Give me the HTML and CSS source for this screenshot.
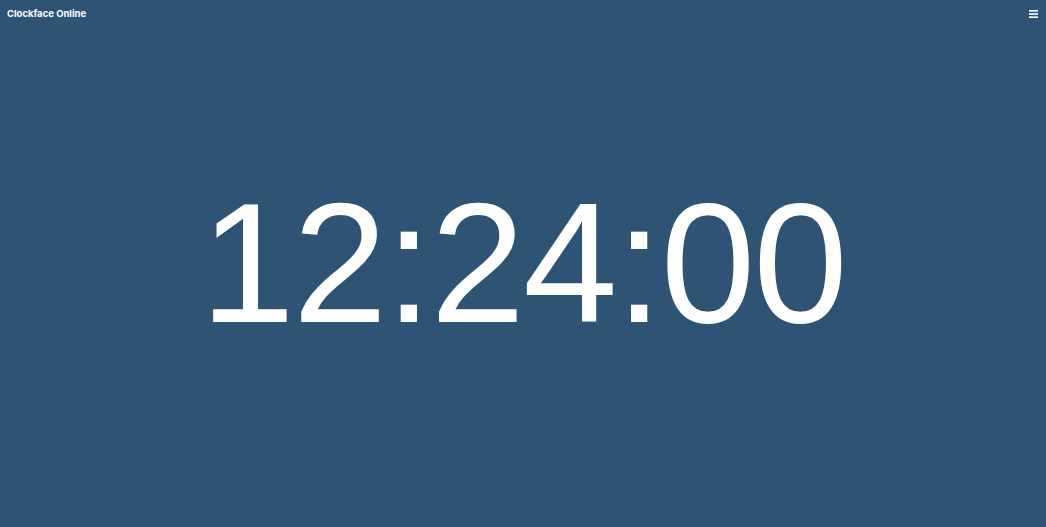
FILE: index.html
```html
<!DOCTYPE html>
<html lang="en">
<head>
  <meta charset="UTF-8">
  <meta name="viewport" content="width=device-width, initial-scale=1.0">
  <title>Clockface Online</title>
  <link rel="stylesheet" href="styles.css">
</head>
<body>
  <header class="topbar">
    <span class="brand">Clockface Online</span>
    <button class="menu" aria-label="Menu">
      <svg width="9" height="8" viewBox="0 0 9 8">
        <rect x="0" y="0" width="9" height="1.6" fill="#fff"/>
        <rect x="0" y="3.2" width="9" height="1.6" fill="#fff"/>
        <rect x="0" y="6.4" width="9" height="1.6" fill="#fff"/>
      </svg>
    </button>
  </header>
  <main class="stage">
    <div class="clock">12:24:00</div>
  </main>
</body>
</html>
```

FILE: styles.css
```css
* {
  margin: 0;
  padding: 0;
  box-sizing: border-box;
}

body {
  font-family: "Liberation Sans", Arial, sans-serif;
  background-color: #2e5374;
  color: #fff;
  height: 100vh;
  display: flex;
  flex-direction: column;
  overflow: hidden;
}

.topbar {
  position: absolute;
  top: 0;
  left: 0;
  right: 0;
  display: flex;
  justify-content: space-between;
  align-items: center;
  height: 27px;
  padding: 0 8px 0 7px;
}

.brand {
  font-family: Inter, "Open Sans", sans-serif;
  font-weight: 700;
  font-size: 9.5px;
}

.menu {
  background: none;
  border: none;
  display: flex;
  cursor: pointer;
}

.stage {
  flex: 1;
  display: flex;
  justify-content: center;
  align-items: center;
}

.clock {
  font-size: 170px;
  line-height: 1;
  letter-spacing: -2px;
  margin-top: -1px;
}
```
